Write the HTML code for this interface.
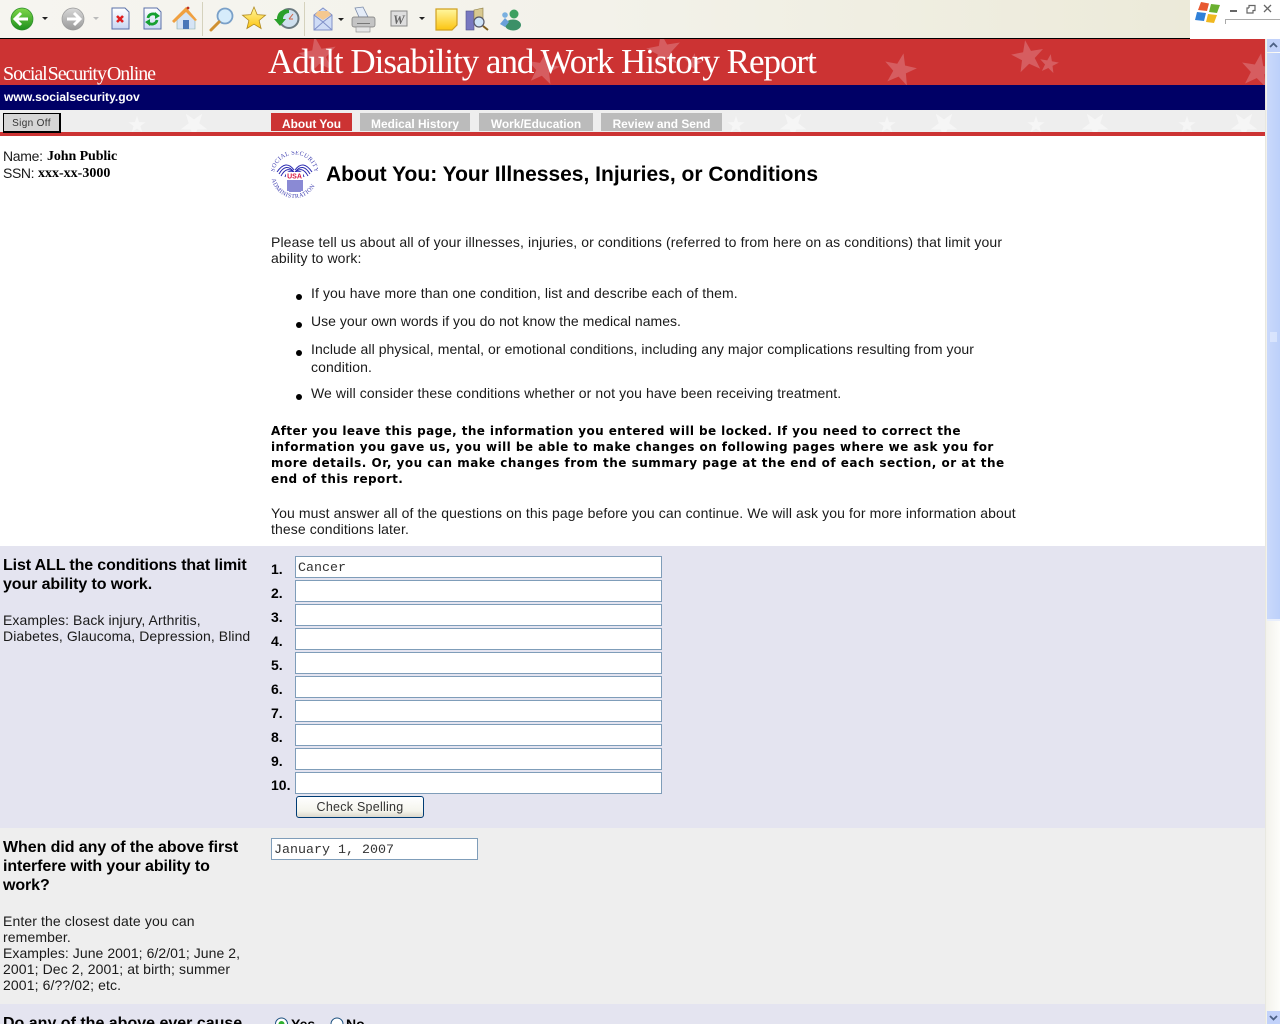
<!DOCTYPE html>
<html><head><meta charset="utf-8"><title>Adult Disability and Work History Report</title>
<style>
html,body{margin:0;padding:0;width:1280px;height:1024px;overflow:hidden;background:#fff}
body{position:relative;font-family:"Liberation Sans",Arial,sans-serif;font-size:14px;color:#1a1a1a}
.a{position:absolute;white-space:nowrap}
.t{position:absolute;white-space:nowrap;font-size:14px;line-height:16px;letter-spacing:.11px}
.b{position:absolute;white-space:nowrap;font-family:"DejaVu Sans",sans-serif;font-weight:bold;font-size:12px;line-height:16px;letter-spacing:.44px;color:#000}
.h{position:absolute;white-space:nowrap;font-weight:bold;font-size:16px;line-height:19px;color:#000;letter-spacing:-.1px}
.n{position:absolute;left:271px;font-weight:bold;font-size:14px;line-height:16px;color:#000}
.i{position:absolute;left:295px;width:365px;height:20px;border:1px solid #7f9db9;background:#fff;font-family:"Liberation Mono",monospace;font-size:13.33px;line-height:24px;text-indent:2px;color:#333;overflow:hidden}
.tab{position:absolute;top:113px;height:18px;background:#bbb;color:#fff;font-weight:bold;font-size:11.9px;line-height:23px;text-align:center}
.s{position:absolute;font-family:"Liberation Serif",serif;font-weight:bold;font-size:14px;line-height:16px;color:#000}
.dot{position:absolute;left:296px;width:6px;height:6px;background:#000;border-radius:50%}
</style></head><body>
<!-- toolbar -->
<div class="a" style="left:0;top:0;width:1190px;height:38px;background:linear-gradient(90deg,#f6f5f0,#f3f2ea 50%,#ecead9)"></div>
<div class="a" style="left:0;top:38px;width:1190px;height:1px;background:#000"></div>
<svg class="a" style="left:0;top:0" width="560" height="38" viewBox="0 0 560 38">
<defs>
<linearGradient id="g" x1="0" y1="0" x2="0" y2="1"><stop offset="0" stop-color="#7fd84a"/><stop offset="1" stop-color="#1d8f1d"/></linearGradient>
<linearGradient id="gr" x1="0" y1="0" x2="0" y2="1"><stop offset="0" stop-color="#d8d8d8"/><stop offset="1" stop-color="#999"/></linearGradient>
<linearGradient id="y" x1="0" y1="0" x2="0" y2="1"><stop offset="0" stop-color="#fff7a0"/><stop offset="1" stop-color="#fcc410"/></linearGradient>
<linearGradient id="p" x1="0" y1="0" x2="0" y2="1"><stop offset="0" stop-color="#fff"/><stop offset="1" stop-color="#c9d6f2"/></linearGradient>
</defs>
<circle cx="22" cy="19" r="11" fill="url(#g)" stroke="#2a8a2a" stroke-width=".7"/>
<path d="M16 19h12M21 13l-6 6 6 6" fill="none" stroke="#fff" stroke-width="3"/>
<path d="M42 17h6l-3 3z" fill="#222"/>
<circle cx="73" cy="19" r="11" fill="url(#gr)" stroke="#999" stroke-width=".7"/>
<path d="M67 19h12M74 13l6 6-6 6" fill="none" stroke="#fff" stroke-width="3"/>
<path d="M93 17h6l-3 3z" fill="#bbb"/>
<path d="M112 8h13l4 4v17h-17z" fill="url(#p)" stroke="#5a70a8"/>
<path d="M117 16l6 6M123 16l-6 6" stroke="#e02020" stroke-width="2.6"/>
<path d="M144 8h13l4 4v17h-17z" fill="url(#p)" stroke="#5a70a8"/>
<path d="M148 18a5 5 0 0 1 9-2M157 20a5 5 0 0 1-9 2" fill="none" stroke="#16a030" stroke-width="2.8"/>
<path d="M155 12l5 4-5 3zM150 26l-5-4 5-3z" fill="#16a030"/>
<path d="M177 18v11h18V18l-9-7z" fill="#d6e4f5" stroke="#8aa" stroke-width=".6"/>
<path d="M172 21l14-14 11 13-2 1-9-9-12 11z" fill="#f0a040"/>
<rect x="183" y="20" width="6" height="9" fill="#4a78b8"/>
<circle cx="188" cy="8" r="1.4" fill="#c03020"/>
<rect x="202" y="2" width="1" height="34" fill="#d5d2bd"/>
<circle cx="225" cy="16" r="7.5" fill="#d6ecfb" stroke="#7aa0c8" stroke-width="1.8"/>
<path d="M219 22l-8 8" stroke="#d09030" stroke-width="3" stroke-linecap="round"/>
<path d="M254 7l3.200 7.600 8.300.6-6.400 5.300 2 8-7.100-4.300-7.100 4.300 2-8-6.400-5.300 8.300-.6z" fill="url(#y)" stroke="#b08a20" stroke-width=".8"/>
<circle cx="289" cy="18.500" r="9.500" fill="#cfe0ee" stroke="#6b7a80" stroke-width="2"/>
<path d="M289 19l4-5M289 19h4" stroke="#d06040" stroke-width="1"/>
<path d="M277 19h-3l6 7 6-7h-3a6 6 0 0 1 6-6v-3a9 9 0 0 0-12 9z" fill="#2aa02a"/>
<rect x="304" y="2" width="1" height="34" fill="#d5d2bd"/>
<path d="M314 15l9-7 9 7v15h-18z" fill="#cfdcf6" stroke="#8090c8"/>
<path d="M318 11h10l3 4-8 5-8-5z" fill="#f4c890"/>
<path d="M314 15l9 7 9-7M314 30l9-8 9 8" fill="none" stroke="#8090c8"/>
<path d="M338 18h6l-3 3z" fill="#222"/>
<path d="M355 8l8-1 5 10h-9z" fill="#e4ecf8" stroke="#7a8aa8" stroke-width=".8"/>
<rect x="352" y="17" width="23" height="10" rx="2" fill="#c4c4c4" stroke="#777" stroke-width=".7"/>
<rect x="357" y="23" width="13" height="1" fill="#777"/>
<rect x="356" y="27" width="14" height="5" fill="#e6e6e6" stroke="#888" stroke-width=".6"/>
<rect x="391" y="11" width="16" height="15" fill="#dedede" stroke="#888"/>
<text x="393" y="24" font-family="Liberation Serif,serif" font-style="italic" font-weight="bold" font-size="13" fill="#666">W</text>
<path d="M419 17h6l-3 3z" fill="#222"/>
<path d="M436 9h21v16l-5 5h-16z" fill="url(#y)" stroke="#d0a020" stroke-width="1.200"/>
<rect x="466" y="11" width="8" height="19" fill="#7878c0" stroke="#50508a" stroke-width=".6"/>
<path d="M474 10l9-2v16h-9z" fill="#d8c890" stroke="#8a7a40" stroke-width=".6"/>
<circle cx="479" cy="22" r="5" fill="#cfe4f8" stroke="#556" stroke-width="1.200"/>
<path d="M483 26l5 4" stroke="#806020" stroke-width="2"/>
<circle cx="514" cy="14" r="4.500" fill="#3ca060"/>
<ellipse cx="513" cy="25" rx="8" ry="5.500" fill="#3c9068"/>
<circle cx="505" cy="15" r="2.800" fill="#7ab0e0"/>
<path d="M500 24l5-6 4 4-4 5z" fill="#6aa0d8"/>
</svg>
<!-- windows corner -->
<svg class="a" style="left:1190px;top:0" width="90" height="39" viewBox="0 0 90 39">
<path d="M11 2l8 1.500-2 7.500-9-1z" fill="#e85830"/><path d="M21 4l9 1-3 8-8-1z" fill="#6ab030"/>
<path d="M7 12l9 1-2 8-9-1z" fill="#3080d8"/><path d="M18 14l9 1-3 8-8-1z" fill="#f0b820"/>
<rect x="40" y="10" width="7" height="2" fill="#666"/>
<path d="M59 8h-2v5h6v-3M59 8V5.500h6v5h-2" fill="none" stroke="#666" stroke-width="1.200"/>
<path d="M74 5l7 7M81 5l-7 7" stroke="#666" stroke-width="1.300"/>
<path d="M35.500 24v-4.500H90" fill="none" stroke="#aaa"/>
</svg>
<!-- header -->
<svg class="a" style="left:0;top:39px" width="1265" height="97" viewBox="0 0 1265 97">
<defs><polygon id="st" points="0,-1 .235,-.324 .951,-.309 .38,.124 .588,.809 0,.4 -.588,.809 -.38,.124 -.951,-.309 -.235,-.324"/>
<clipPath id="c1"><rect width="1265" height="46"/></clipPath></defs>
<rect width="1265" height="46" fill="#cc3333"/>
<g fill="#d65d60" clip-path="url(#c1)">
<use href="#st" transform="translate(318,17) scale(20) rotate(-10)"/>
<use href="#st" transform="translate(543,30) scale(17) rotate(10)"/>
<use href="#st" transform="translate(664,12) scale(18) rotate(-10)"/>
<use href="#st" transform="translate(693,24) scale(10) rotate(10)"/>
<use href="#st" transform="translate(900,31) scale(17) rotate(12)"/>
<use href="#st" transform="translate(1028,18) scale(17) rotate(-10)"/>
<use href="#st" transform="translate(1049,25) scale(10) rotate(10)"/>
<use href="#st" transform="translate(1258,32) scale(18) rotate(10)"/>
</g>
<rect x="0" y="46" width="1265" height="25" fill="#000066"/>
<rect x="0" y="71" width="1265" height="22" fill="#eeeeee"/>
<g fill="#f6f6f6">
<use href="#st" transform="translate(137,86) scale(9)"/><use href="#st" transform="translate(194,86) scale(14) rotate(36)"/>
<use href="#st" transform="translate(736,86) scale(9)"/><use href="#st" transform="translate(793,86) scale(14) rotate(36)"/>
<use href="#st" transform="translate(887,86) scale(9)"/><use href="#st" transform="translate(944,86) scale(14) rotate(36)"/>
<use href="#st" transform="translate(1036,86) scale(9)"/><use href="#st" transform="translate(1095,86) scale(14) rotate(36)"/>
<use href="#st" transform="translate(1187,86) scale(9)"/><use href="#st" transform="translate(1244,86) scale(14) rotate(36)"/>
</g>
<rect x="0" y="93" width="1265" height="4" fill="#cc3333"/>
</svg>
<div class="a" style="left:3px;top:62px;font-family:'Liberation Serif',serif;font-size:20px;line-height:24px;color:#fff;letter-spacing:-1.050px;word-spacing:-3px">Social Security Online</div>
<div class="a" style="left:268px;top:42px;font-family:'Liberation Serif',serif;font-size:35px;line-height:40px;color:#fff;letter-spacing:-1.020px">Adult Disability and Work History Report</div>
<div class="a" style="left:4px;top:89px;font-weight:bold;font-size:12.100px;line-height:16px;color:#fff">www.socialsecurity.gov</div>
<div class="a" style="left:3px;top:113px;width:55px;height:17px;border:1px solid #000;border-right-width:2px;border-bottom-width:2px;background:#d6d6d6;font-size:10px;line-height:19px;text-align:center;color:#333;letter-spacing:.35px">Sign Off</div>
<div class="tab" style="left:271px;width:81px;background:#cc3333">About You</div>
<div class="tab" style="left:360px;width:110px">Medical History</div>
<div class="tab" style="left:479px;width:114px">Work/Education</div>
<div class="tab" style="left:601px;width:121px">Review and Send</div>
<!-- left info -->
<div class="t" style="left:3px;top:148px;letter-spacing:-.3px">Name:</div><div class="s" style="left:47px;top:149px;letter-spacing:-.1px">John Public</div>
<div class="t" style="left:3px;top:165px;letter-spacing:-.4px">SSN:</div><div class="s" style="left:38px;top:166px">xxx-xx-3000</div>
<!-- SSA seal -->
<svg class="a" style="left:271px;top:151px" width="47" height="48" viewBox="0 0 47 48">
<path id="arcT" d="M3 24a20.500 20.500 0 0 1 41 0" fill="none"/>
<path id="arcB" d="M.5 24a23 23 0 0 0 46 0" fill="none"/>
<text font-family="Liberation Serif,serif" font-size="6.200" fill="#4040b0" letter-spacing=".3"><textPath href="#arcT" startOffset="3">SOCIAL SECURITY</textPath></text>
<text font-family="Liberation Serif,serif" font-size="6" fill="#4040b0" letter-spacing=".4"><textPath href="#arcB" startOffset="4">ADMINISTRATION</textPath></text>
<g fill="none" stroke="#2b2bb0" stroke-width="1">
<path d="M23 19Q15 8 6 21M23 21Q15 11 8 23M23 22Q16 14 10 25M23 23Q17 17 14 26"/>
<path d="M24 19Q32 8 41 21M24 21Q32 11 39 23M24 22Q31 14 37 25M24 23Q30 17 33 26"/>
</g>
<rect x="15" y="21" width="17" height="7" fill="#fff"/>
<text x="23.500" y="27.500" text-anchor="middle" font-family="Liberation Sans,sans-serif" font-weight="bold" font-size="7" fill="#d81840">USA</text>
<path d="M17 29v11M19 29v12M21 29v12M23 29v12M25 29v12M27 29v12M29 29v12M31 29v11" stroke="#2b2bb0" stroke-width="1.100"/>
</svg>
<div class="a" style="left:326px;top:162px;font-weight:bold;font-size:21px;line-height:26px;color:#000">About You: Your Illnesses, Injuries, or Conditions</div>
<!-- intro -->
<div class="t" style="left:271px;top:234px">Please tell us about all of your illnesses, injuries, or conditions (referred to from here on as conditions) that limit your</div>
<div class="t" style="left:271px;top:250px">ability to work:</div>
<div class="dot" style="top:294px"></div><div class="t" style="left:311px;top:285px;letter-spacing:.095px">If you have more than one condition, list and describe each of them.</div>
<div class="dot" style="top:322px"></div><div class="t" style="left:311px;top:313px;letter-spacing:.02px">Use your own words if you do not know the medical names.</div>
<div class="dot" style="top:350px"></div><div class="t" style="left:311px;top:341px;letter-spacing:.065px">Include all physical, mental, or emotional conditions, including any major complications resulting from your</div>
<div class="t" style="left:311px;top:359px">condition.</div>
<div class="dot" style="top:394px"></div><div class="t" style="left:311px;top:385px;letter-spacing:.1px">We will consider these conditions whether or not you have been receiving treatment.</div>
<div class="b" style="left:271px;top:423px;letter-spacing:.41px">After you leave this page, the information you entered will be locked. If you need to correct the</div>
<div class="b" style="left:271px;top:439px">information you gave us, you will be able to make changes on following pages where we ask you for</div>
<div class="b" style="left:271px;top:455px;letter-spacing:.49px">more details. Or, you can make changes from the summary page at the end of each section, or at the</div>
<div class="b" style="left:271px;top:471px">end of this report.</div>
<div class="t" style="left:271px;top:505px;letter-spacing:.1px">You must answer all of the questions on this page before you can continue. We will ask you for more information about</div>
<div class="t" style="left:271px;top:521px">these conditions later.</div>
<!-- section bands -->
<div class="a" style="left:0;top:546px;width:1265px;height:282px;background:#e4e4f0"></div>
<div class="a" style="left:0;top:828px;width:1265px;height:176px;background:#eeeeee"></div>
<div class="a" style="left:0;top:1004px;width:1265px;height:20px;background:#e4e4f0"></div>
<div class="h" style="left:3px;top:556px;letter-spacing:-.13px">List ALL the conditions that limit</div>
<div class="h" style="left:3px;top:575px">your ability to work.</div>
<div class="t" style="left:3px;top:612px;letter-spacing:.08px">Examples: Back injury, Arthritis,</div>
<div class="t" style="left:3px;top:628px;letter-spacing:.08px">Diabetes, Glaucoma, Depression, Blind</div>
<div class="n" style="top:561px">1.</div><div class="i" style="top:556px">Cancer</div>
<div class="n" style="top:585px">2.</div><div class="i" style="top:580px"></div>
<div class="n" style="top:609px">3.</div><div class="i" style="top:604px"></div>
<div class="n" style="top:633px">4.</div><div class="i" style="top:628px"></div>
<div class="n" style="top:657px">5.</div><div class="i" style="top:652px"></div>
<div class="n" style="top:681px">6.</div><div class="i" style="top:676px"></div>
<div class="n" style="top:705px">7.</div><div class="i" style="top:700px"></div>
<div class="n" style="top:729px">8.</div><div class="i" style="top:724px"></div>
<div class="n" style="top:753px">9.</div><div class="i" style="top:748px"></div>
<div class="n" style="top:777px">10.</div><div class="i" style="top:772px"></div>
<div class="a" style="left:296px;top:796px;width:126px;height:20px;border:1px solid #003c74;border-radius:3px;background:linear-gradient(#fff,#f4f4ec 70%,#dcd8cc);font-size:12.500px;line-height:20px;text-align:center;color:#333;letter-spacing:.25px">Check Spelling</div>
<div class="h" style="left:3px;top:838px;letter-spacing:-.07px">When did any of the above first</div>
<div class="h" style="left:3px;top:857px">interfere with your ability to</div>
<div class="h" style="left:3px;top:876px">work?</div>
<div class="t" style="left:3px;top:913px">Enter the closest date you can</div>
<div class="t" style="left:3px;top:929px">remember.</div>
<div class="t" style="left:3px;top:945px;letter-spacing:.055px">Examples: June 2001; 6/2/01; June 2,</div>
<div class="t" style="left:3px;top:961px">2001; Dec 2, 2001; at birth; summer</div>
<div class="t" style="left:3px;top:977px">2001; 6/??/02; etc.</div>
<div class="i" style="left:271px;top:838px;width:205px">January 1, 2007</div>
<div class="h" style="left:3px;top:1014px;letter-spacing:0">Do any of the above ever cause</div>
<svg class="a" style="left:274px;top:1016px" width="70" height="8" viewBox="0 0 70 8">
<circle cx="7.500" cy="8" r="6" fill="#fff" stroke="#1c5180"/><circle cx="7.500" cy="8" r="3" fill="#2fb02f"/>
<circle cx="63" cy="8" r="6" fill="#fff" stroke="#1c5180"/>
</svg>
<div class="a" style="left:291px;top:1016px;font-weight:bold;font-size:14px;line-height:16px;color:#000">Yes</div>
<div class="a" style="left:346px;top:1016px;font-weight:bold;font-size:14px;line-height:16px;color:#000">No</div>
<!-- scrollbar -->
<div class="a" style="left:1265px;top:39px;width:1px;height:985px;background:#e8e8e0"></div>
<div class="a" style="left:1266px;top:39px;width:14px;height:985px;background:linear-gradient(90deg,#f3f2ec,#fdfdfa)"></div>
<div class="a" style="left:1267px;top:39px;width:13px;height:13px;background:#c2d2fa"></div>
<div class="a" style="left:1267px;top:53px;width:13px;height:568px;background:linear-gradient(90deg,#cad9fb,#bcd0fa);border-bottom:2px solid #e8eefc;box-sizing:border-box"></div>
<div class="a" style="left:1267px;top:1011px;width:13px;height:13px;background:#c2d2fa"></div>
<svg class="a" style="left:1267px;top:0" width="13" height="1024" viewBox="0 0 13 1024">
<path d="M3 47l3.500-3.500L10 47M3 1016l3.500 3.500L10 1016" fill="none" stroke="#4d6185" stroke-width="1.800"/>
<path d="M3 333h7M3 335h7M3 337h7M3 339h7M3 341h7" stroke="#eef3ff"/>
</svg>
</body></html>
